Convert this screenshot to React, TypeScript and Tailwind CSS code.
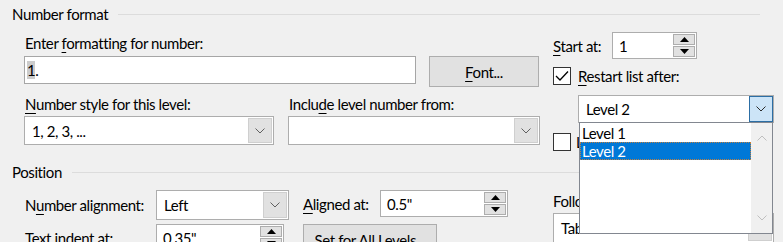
import { ReactNode } from "react";

const U = ({ children }: { children: ReactNode }) => (
  <span className="underline underline-offset-[3px] decoration-1">{children}</span>
);

const Chevron = ({ up = false, color = "#606060" }: { up?: boolean; color?: string }) => (
  <svg width="10" height="6" viewBox="0 0 10 6" className={up ? "rotate-180" : ""}>
    <polyline points="0.5,0.5 5,5 9.5,0.5" fill="none" stroke={color} strokeWidth="1" />
  </svg>
);

const Arrow = ({ up = false }: { up?: boolean }) => (
  <svg width="9" height="5" viewBox="0 0 9 5">
    <polygon points={up ? "0,5 9,5 4.5,0" : "0,0 9,0 4.5,5"} fill="#000" />
  </svg>
);

const GroupHeader = ({ title }: { title: string }) => (
  <div className="flex items-center h-[20px] pl-[12px] pr-[23px]">
    <span className="leading-[20px]">{title}</span>
    <div className="flex-1 h-px bg-[#dcdcdc] ml-[10px] mt-[1px]" />
  </div>
);

type ComboProps = {
  value?: string;
  className: string;
  active?: boolean;
};

const Combo = ({ value, className, active }: ComboProps) => (
  <div className={`flex bg-white border border-[#adadad] ${className}`}>
    <div className="flex-1 flex items-center pl-[7px] overflow-hidden whitespace-nowrap">
      <span>{value}</span>
    </div>
    <div
      className={`w-[24px] flex items-center justify-center border ${
        active ? "bg-[#cce4f7] border-[#2c6ea4]" : "bg-[#e1e1e1] border-[#cfcfcf] m-px"
      }`}
    >
      <Chevron color={active ? "#2b2b2b" : "#606060"} />
    </div>
  </div>
);

const Spin = ({ value, className }: { value: string; className: string }) => (
  <div className={`flex bg-white border border-[#adadad] ${className}`}>
    <div className="flex-1 flex items-center pl-[6px] whitespace-nowrap">
      <span>{value}</span>
    </div>
    <div className="w-[24px] flex flex-col p-px gap-px">
      <div className="flex-1 bg-[#e1e1e1] border border-[#adadad] flex items-center justify-center">
        <Arrow up />
      </div>
      <div className="flex-1 bg-[#e1e1e1] border border-[#adadad] flex items-center justify-center">
        <Arrow />
      </div>
    </div>
  </div>
);

const Button = ({ children, className }: { children: ReactNode; className: string }) => (
  <div className={`flex items-center justify-center bg-[#e1e1e1] border border-[#adadad] ${className}`}>
    <span className="whitespace-nowrap">{children}</span>
  </div>
);

const CheckBox = ({ checked }: { checked?: boolean }) => (
  <div className="w-[18px] h-[18px] shrink-0 bg-white border border-[#333333] flex items-center justify-center">
    {checked && (
      <svg width="14" height="12" viewBox="0 0 14 12">
        <polyline points="1,6 5,10 13,1.5" fill="none" stroke="#000" strokeWidth="1.3" />
      </svg>
    )}
  </div>
);

export default function App() {
  return (
    <div
      className="w-[783px] h-[242px] overflow-hidden bg-[#f0f0f0] text-[15px] leading-[20px] tracking-[-0.4px] text-black"
      style={{ fontFamily: 'Lato, "Noto Sans", sans-serif' }}
    >
      <div className="pt-[4px]">
        <GroupHeader title="Number format" />
      </div>

      <div className="flex pl-[24px] h-[138px]">
        {/* left column */}
        <div className="w-[516px] flex flex-col">
          <div className="pl-px mt-[9px]">
            Enter <U>f</U>ormatting for number:
          </div>
          <div className="flex items-start mt-[3px]">
            <div className="w-[392px] h-[28px] bg-white border border-[#a6a6a6] flex items-center pl-[2px]">
              <span>
                <span className="bg-[#cccccc]">1</span>.
              </span>
            </div>
            <Button className="w-[110px] h-[31px] ml-[13px]">
              <U>F</U>ont...
            </Button>
          </div>
          <div className="flex mt-[7px]">
            <div className="w-[264px] pl-px">
              <U>N</U>umber style for this level:
            </div>
            <div className="pl-px">
              Inclu<U>d</U>e level number from:
            </div>
          </div>
          <div className="flex mt-[2px]">
            <Combo value="1, 2, 3, ..." className="w-[250px] h-[29px]" />
            <Combo className="w-[252px] h-[29px] ml-[14px]" />
          </div>
        </div>

        {/* right column */}
        <div className="ml-[12px] w-[222px] flex flex-col relative">
          <div className="flex items-center mt-[8px]">
            <div className="w-[60px] pl-px">
              <U>S</U>tart at:
            </div>
            <Spin value="1" className="w-[85px] h-[27px]" />
          </div>
          <div className="flex items-center mt-[7px] pl-px">
            <CheckBox checked />
            <span className="ml-[7px]">
              <U>R</U>estart list after:
            </span>
          </div>
          <Combo value="Level 2" active className="w-[196px] h-[28px] ml-[26px] mt-[9px]" />
          <div className="flex items-center mt-[9px] pl-px">
            <CheckBox />
            <span className="ml-[5px]">L</span>
          </div>

          {/* open dropdown list */}
          <div className="absolute left-[27px] top-[98px] w-[194px] h-[112px] bg-white border border-[#828790] z-10 flex">
            <div className="flex-1 flex flex-col pt-px">
              <div className="h-[18px] pl-[2px] leading-[18px]">Level 1</div>
              <div className="h-[18px] pl-[2px] leading-[18px] bg-[#0078d7] text-white outline-1 outline-dotted outline-[#c08040] -outline-offset-1">
                Level 2
              </div>
            </div>
            <div className="w-[21px] bg-[#f0f0f0] flex flex-col items-center justify-between py-[12px]">
              <Chevron up color="#bfbfbf" />
              <Chevron color="#bfbfbf" />
            </div>
          </div>
        </div>
      </div>

      <GroupHeader title="Position" />

      <div className="flex pl-[24px]">
        <div className="w-[516px] flex flex-col">
          <div className="flex items-start mt-[8px]">
            <div className="w-[132px] h-[30px] flex items-center pl-px">
              <span className="whitespace-nowrap">
                N<U>u</U>mber alignment:
              </span>
            </div>
            <Combo value="Left" className="w-[133px] h-[30px]" />
            <div className="w-[77px] h-[27px] flex items-center ml-[14px]">
              <span className="whitespace-nowrap">
                <U>A</U>ligned at:
              </span>
            </div>
            <Spin value="0.5&quot;" className="w-[128px] h-[27px]" />
          </div>
          <div className="flex items-start mt-[4px]">
            <div className="w-[132px] h-[27px] flex items-center pl-px">
              <span className="whitespace-nowrap">
                Text <U>i</U>ndent at:
              </span>
            </div>
            <Spin value="0.35&quot;" className="w-[128px] h-[27px]" />
            <Button className="w-[134px] h-[31px] ml-[19px]">Set for All Levels...</Button>
          </div>
        </div>
        <div className="ml-[13px] w-[221px] flex flex-col">
          <div className="mt-[9px] whitespace-nowrap">
            Follo<U>w</U> number with:
          </div>
          <Combo value="Tab character" className="w-[221px] h-[30px] mt-[2px]" />
        </div>
      </div>
    </div>
  );
}
